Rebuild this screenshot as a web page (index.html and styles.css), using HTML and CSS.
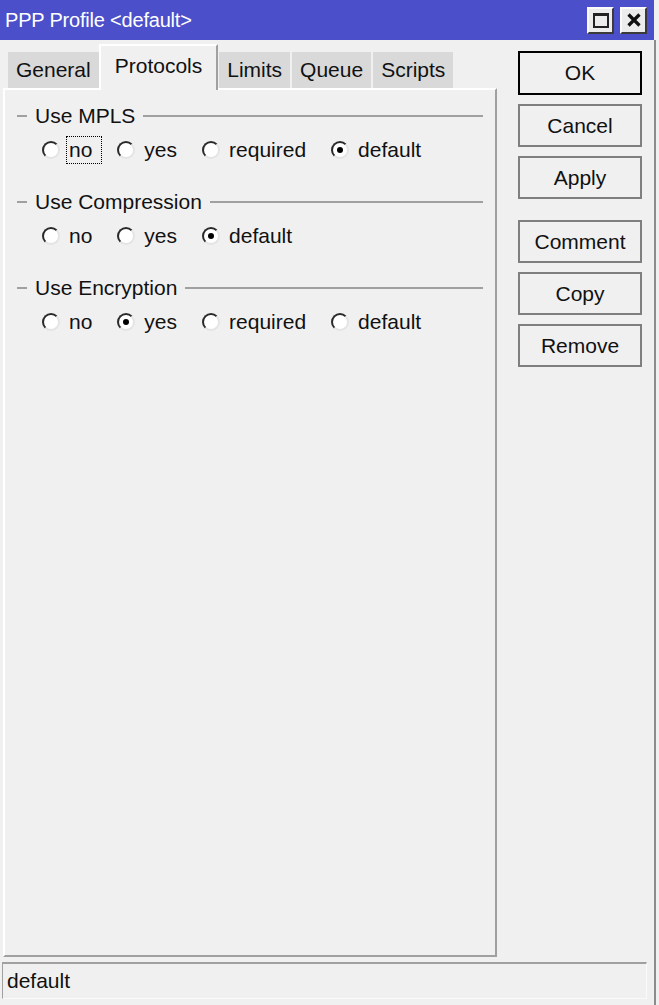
FILE: index.html
```html
<!DOCTYPE html>
<html>
<head>
<meta charset="utf-8">
<title>PPP Profile &lt;default&gt;</title>
<link rel="stylesheet" href="styles.css">
</head>
<body>
<div class="window">
  <div class="titlebar">
    <span class="title">PPP Profile &lt;default&gt;</span>
    <div class="tb-buttons">
      <span class="tb-btn"><span class="max-icon"></span></span>
      <span class="tb-btn">
        <svg width="16" height="16" viewBox="0 0 16 16"><path d="M2.5 2.5 L13.5 13.5 M13.5 2.5 L2.5 13.5" stroke="#111" stroke-width="3.2" fill="none"/></svg>
      </span>
    </div>
  </div>
  <div class="body">
    <div class="main">
      <div class="left">
        <div class="tabs">
          <span class="tab">General</span>
          <span class="tab active">Protocols</span>
          <span class="tab">Limits</span>
          <span class="tab">Queue</span>
          <span class="tab">Scripts</span>
        </div>
        <div class="panel">
          <div class="group">
            <div class="legend"><span class="dash"></span><span class="legend-text">Use MPLS</span><span class="rule"></span></div>
            <div class="radios">
              <span class="opt"><span class="radio"></span><span class="lbl focus">no</span></span>
              <span class="opt"><span class="radio"></span><span class="lbl">yes</span></span>
              <span class="opt"><span class="radio"></span><span class="lbl">required</span></span>
              <span class="opt"><span class="radio checked"></span><span class="lbl">default</span></span>
            </div>
          </div>
          <div class="group">
            <div class="legend"><span class="dash"></span><span class="legend-text">Use Compression</span><span class="rule"></span></div>
            <div class="radios">
              <span class="opt"><span class="radio"></span><span class="lbl">no</span></span>
              <span class="opt"><span class="radio"></span><span class="lbl">yes</span></span>
              <span class="opt"><span class="radio checked"></span><span class="lbl">default</span></span>
            </div>
          </div>
          <div class="group">
            <div class="legend"><span class="dash"></span><span class="legend-text">Use Encryption</span><span class="rule"></span></div>
            <div class="radios">
              <span class="opt"><span class="radio"></span><span class="lbl">no</span></span>
              <span class="opt"><span class="radio checked"></span><span class="lbl">yes</span></span>
              <span class="opt"><span class="radio"></span><span class="lbl">required</span></span>
              <span class="opt"><span class="radio"></span><span class="lbl">default</span></span>
            </div>
          </div>
        </div>
      </div>
      <div class="buttons">
        <button class="btn default">OK</button>
        <button class="btn">Cancel</button>
        <button class="btn">Apply</button>
        <button class="btn spaced">Comment</button>
        <button class="btn">Copy</button>
        <button class="btn">Remove</button>
      </div>
    </div>
    <div class="status">default</div>
  </div>
</div>
</body>
</html>
```

FILE: styles.css
```css
* { box-sizing: border-box; }
html, body {
  margin: 0;
  padding: 0;
  background: #f0f0f0;
}
body {
  font-family: "Liberation Sans", Arial, sans-serif;
  font-size: 21px;
  color: #111;
}
.window {
  width: 656px;
  height: 1005px;
  display: flex;
  flex-direction: column;
}
.titlebar {
  height: 40px;
  width: 654px;
  background: #4b4fc9;
  display: flex;
  align-items: center;
  justify-content: space-between;
  padding: 0 7px 0 5px;
}
.title {
  color: #fff;
  font-size: 20px;
  letter-spacing: -0.2px;
}
.tb-buttons {
  display: flex;
  gap: 6px;
}
.tb-btn {
  width: 27px;
  height: 27px;
  background: #ececec;
  border: 2px solid;
  border-color: #fafafa #3a3a3a #3a3a3a #fafafa;
  display: flex;
  align-items: center;
  justify-content: center;
}
.max-icon {
  width: 16px;
  height: 15px;
  border: 2px solid #222;
  border-top-width: 3px;
}
.body {
  flex: 1;
  display: flex;
  flex-direction: column;
  border-right: 2px solid #8c8c8c;
}
.main {
  flex: 1;
  display: flex;
  padding-left: 3px;
}
.left {
  width: 494px;
  display: flex;
  flex-direction: column;
}
.tabs {
  display: flex;
  align-items: flex-end;
  height: 48px;
  padding-left: 5px;
}
.tab {
  height: 36px;
  line-height: 36px;
  padding: 0 8px;
  background: #d9d9d9;
  margin-right: 2px;
  white-space: nowrap;
}
.tab:first-child {
  margin-right: 0;
}
.tab.active {
  height: 46px;
  line-height: 40px;
  padding: 0 14px 0 14px;
  margin: 0 1px -2px 0;
  background: #f0f0f0;
  border-top: 2px solid #fff;
  border-left: 2px solid #fff;
  border-right: 2px solid #a0a0a0;
  position: relative;
  z-index: 1;
}
.panel {
  flex: 1;
  border: 2px solid;
  border-color: #fff #a0a0a0 #a0a0a0 #fff;
  padding-top: 13px;
  display: flex;
  flex-direction: column;
  gap: 25px;
}
.group {
  display: flex;
  flex-direction: column;
  gap: 7px;
}
.legend {
  display: flex;
  align-items: center;
  height: 26px;
  padding: 0 12px 0 12px;
}
.dash {
  width: 10px;
  height: 2px;
  background: #a0a0a0;
  margin-right: 8px;
}
.legend-text {
  line-height: 26px;
  white-space: nowrap;
}
.rule {
  flex: 1;
  height: 2px;
  background: #a0a0a0;
  margin-left: 8px;
}
.radios {
  display: flex;
  align-items: center;
  gap: 15px;
  padding-left: 37px;
  height: 28px;
}
.opt {
  display: flex;
  align-items: center;
}
.radio {
  width: 18px;
  height: 18px;
  border-radius: 50%;
  background: #fff;
  border: 2px solid;
  border-color: #2a2a2a #e4e4e4 #e4e4e4 #2a2a2a;
  margin-right: 6px;
  display: flex;
  align-items: center;
  justify-content: center;
}
.radio.checked::after {
  content: "";
  width: 6px;
  height: 6px;
  border-radius: 50%;
  background: #000;
}
.lbl {
  border: 1px dotted transparent;
  padding: 0 9px 0 2px;
  line-height: 26px;
}
.lbl.focus {
  border-color: #000;
}
.buttons {
  display: flex;
  flex-direction: column;
  gap: 9px;
  padding-top: 11px;
  margin-left: 21px;
}
.btn {
  width: 124px;
  height: 43px;
  font-family: "Liberation Sans", Arial, sans-serif;
  font-size: 21px;
  color: #111;
  background: #f0f0f0;
  border: 2px solid #7f7f7f;
  padding: 0;
}
.btn.default {
  height: 44px;
  border: 2px solid #000;
}
.btn.spaced {
  margin-top: 12px;
}
.status {
  height: 37px;
  width: 645px;
  margin: 5px 0 6px 2px;
  border-top: 2px solid #a0a0a0;
  border-left: 1px solid #a0a0a0;
  border-right: 1px solid #fafafa;
  border-bottom: 1px solid #fafafa;
  padding-left: 4px;
  line-height: 34px;
}
```
